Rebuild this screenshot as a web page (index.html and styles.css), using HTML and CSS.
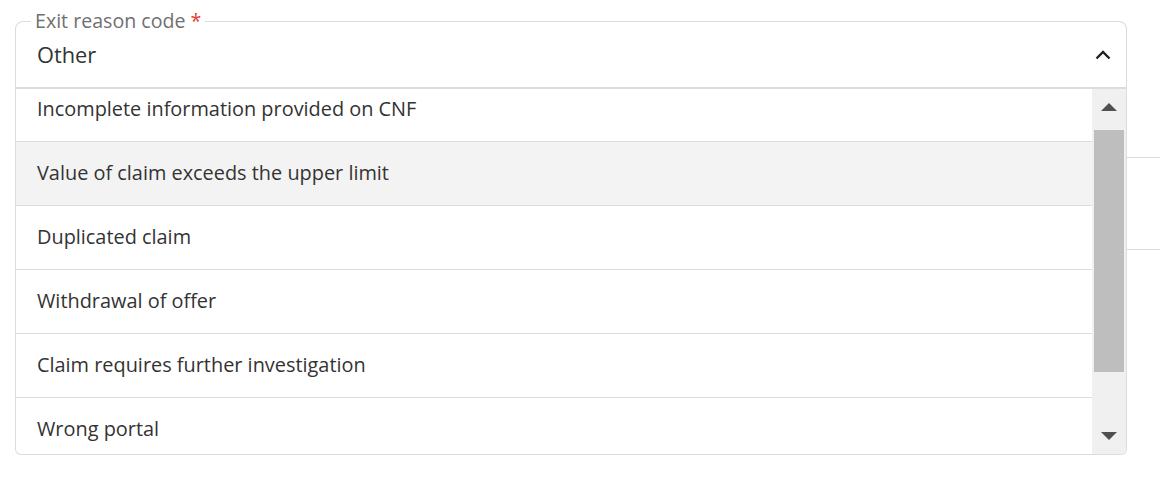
FILE: index.html
```html
<!DOCTYPE html>
<html lang="en">
<head>
  <meta charset="UTF-8">
  <title>Exit reason code</title>
  <link rel="stylesheet" href="styles.css">
</head>
<body>
  <div class="form">
    <!-- Select field, opened -->
    <div class="field">
      <div class="select open">
        <span class="label">Exit reason code <span class="req">*</span></span>
        <div class="select-box">
          <span class="value">Other</span>
          <svg class="chevron" width="16" height="10" viewBox="0 0 16 10">
            <polyline points="1.5,8.5 8,2 14.5,8.5" fill="none" stroke="#222" stroke-width="2.4"/>
          </svg>
        </div>

        <div class="menu">
          <div class="menu-view">
            <ul class="options">
              <li>Incomplete information provided on CNF</li>
              <li class="hover">Value of claim exceeds the upper limit</li>
              <li>Duplicated claim</li>
              <li>Withdrawal of offer</li>
              <li>Claim requires further investigation</li>
              <li>Wrong portal</li>
            </ul>
          </div>
          <div class="scrollbar">
            <div class="arrow up"></div>
            <div class="thumb"></div>
            <div class="arrow down"></div>
          </div>
        </div>
      </div>
    </div>

    <!-- rows of the form behind the menu -->
    <div class="rows">
      <div class="row first"></div>
      <div class="row second"></div>
    </div>
  </div>
</body>
</html>
```

FILE: styles.css
```css
html, body {
  height: 100%;
}
body {
  margin: 0;
  padding: 0;
  font-family: "Open Sans", Arial, sans-serif;
  background: #fff;
  color: #333;
}
.form {
  padding-top: 21px;
  min-height: 470px;
}
.field {
  padding-left: 15px;
}
.select {
  position: relative;
  width: 1112px;
}
.label {
  position: absolute;
  top: -13px;
  left: 16px;
  padding: 0 4px;
  background: #fff;
  font-size: 19.6px;
  line-height: 26px;
  color: #707070;
  z-index: 2;
}
.req {
  color: #e53935;
}
.select-box {
  box-sizing: border-box;
  height: 68px;
  border: 1px solid #dcdcdc;
  border-bottom: 2px solid #dcdcdc;
  border-radius: 8px 8px 0 0;
  display: flex;
  align-items: center;
  justify-content: space-between;
  padding: 0 15px 0 21px;
}
.value {
  font-size: 21.8px;
  color: #333;
}
.chevron {
  display: block;
  margin-top: 1px;
}

/* dropdown list */
.menu {
  position: absolute;
  top: 68px;
  left: 0;
  right: 0;
  height: 366px;
  box-sizing: border-box;
  border: 1px solid #dcdcdc;
  border-top: none;
  border-radius: 0 0 6px 6px;
  background: #fff;
  display: flex;
  overflow: hidden;
  z-index: 3;
}
.menu-view {
  flex: 1;
  overflow: hidden;
}
.options {
  list-style: none;
  margin: -11px 0 0 0;
  padding: 0;
}
.options li {
  box-sizing: border-box;
  height: 64px;
  padding: 0 0 2px 21px;
  border-bottom: 1px solid #dcdcdc;
  display: flex;
  align-items: center;
  font-size: 19.9px;
  color: #333;
}
.options li.hover {
  background: #f3f3f3;
}
.scrollbar {
  width: 34px;
  background: #f0f0f0;
  display: flex;
  flex-direction: column;
  align-items: center;
}
.arrow {
  width: 0;
  height: 0;
  border-left: 8px solid transparent;
  border-right: 8px solid transparent;
}
.arrow.up {
  border-bottom: 8px solid #505050;
  margin: 14px 0 19px;
}
.thumb {
  width: 30px;
  height: 242px;
  background: #bebebe;
}
.arrow.down {
  border-top: 8px solid #505050;
  margin-top: 60px;
}

/* background form rows */
.rows {
  margin-left: 15px;
}
.row {
  border-bottom: 1px solid #dcdcdc;
}
.row.first {
  height: 68px;
}
.row.second {
  height: 91px;
}
```
